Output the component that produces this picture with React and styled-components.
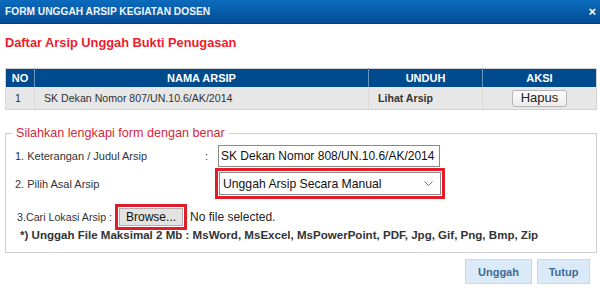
import React from 'react';
import styled, { createGlobalStyle } from 'styled-components';

const GlobalStyle = createGlobalStyle`
  html, body { margin: 0; padding: 0; background: #fff; }
  body { font-family: "Liberation Sans", Arial, sans-serif; color: #333; }
`;

const Dialog = styled.div`
  width: 600px;
  height: 291px;
  display: flex;
  flex-direction: column;
  overflow: hidden;
  background: #fff;
`;

const TitleBar = styled.div`
  height: 23px;
  flex: none;
  display: flex;
  align-items: center;
  justify-content: space-between;
  padding: 0 4px 0 5px;
  background: linear-gradient(#0b6bbd, #054d96);
  border-bottom: 1px solid #043c78;
  color: #eef4fb;
  font-size: 10.2px;
  font-weight: bold;
`;

const Close = styled.span`
  font-size: 13px;
  font-weight: bold;
  color: #fff;
  line-height: 1;
`;

const Body = styled.div`
  padding: 0 3px 0 5px;
`;

const Heading = styled.h2`
  margin: 11px 0 0;
  font-size: 12.8px;
  line-height: 16px;
  font-weight: bold;
  color: #ee1c2c;
`;

const Table = styled.table`
  margin-top: 17px;
  width: 592px;
  border-collapse: collapse;
  border: 1px solid #d2d2d2;
  font-size: 11px;
  th {
    background: #004a8e;
    color: #fff;
    font-weight: bold;
    height: 18px;
    padding: 0;
    border-left: 1px solid #6f95bd;
    text-align: center;
  }
  th:first-child { border-left: none; }
  td {
    background: #e7e7e7;
    height: 22px;
    padding: 0 9px;
    border-left: 1px solid #dadada;
    color: #333;
    font-size: 10.6px;
  }
`;

const Cell = styled.td`
  text-align: ${p => p.$align || 'left'};
  font-weight: ${p => (p.$bold ? 'bold' : 'normal')};
`;

const SmallButton = styled.button`
  font-family: "Liberation Sans", Arial, sans-serif;
  font-size: 13px;
  color: #222;
  height: 17px;
  width: 55px;
  padding: 0;
  border: 1px solid #b5b5b5;
  border-radius: 3px;
  background: linear-gradient(#fdfdfd, #ececec);
  line-height: 14px;
`;

const Fieldset = styled.fieldset`
  margin: 16px 0 0;
  width: 592px;
  box-sizing: border-box;
  border: 1px solid #cfcfcf;
  padding: 5px 9px 0 9px;
  height: 127px;
`;

const Legend = styled.legend`
  color: #d6283a;
  font-size: 12.6px;
  padding: 0 4px;
  margin-left: -3px;
`;

const FormGrid = styled.div`
  display: grid;
  grid-template-columns: 189px 11px auto;
  align-items: center;
  row-gap: 1px;
  font-size: 11px;
  color: #333;
`;

const Colon = styled.span`
  padding-left: 1px;
`;

const TextInput = styled.input`
  width: 222px;
  height: 22px;
  box-sizing: border-box;
  border: 1px solid #8a8a8a;
  padding: 0 2px;
  font-family: "Liberation Sans", Arial, sans-serif;
  font-size: 12px;
  color: #111;
  margin-left: 3px;
`;

const Highlight = styled.div`
  display: inline-flex;
  border: 3px solid #e11d2a;
  padding: 1px;
  justify-self: start;
`;

const SelectBox = styled.div`
  width: 222px;
  height: 23px;
  box-sizing: border-box;
  border: 1px solid #8a8a8a;
  display: flex;
  align-items: center;
  justify-content: space-between;
  padding: 0 7px 0 3px;
  font-size: 12.2px;
  color: #111;
  background: #fff;
`;

const FileRow = styled.div`
  display: flex;
  align-items: center;
  gap: 3px;
  margin-top: 5px;
  margin-left: 2px;
  font-size: 10.7px;
`;

const BrowseButton = styled.div`
  width: 64px;
  height: 18px;
  box-sizing: border-box;
  border: 1px solid #b0b0b0;
  background: #e3e3e3;
  font-size: 12px;
  color: #111;
  display: flex;
  align-items: center;
  justify-content: center;
`;

const FileText = styled.span`
  font-size: 12px;
  color: #222;
`;

const Note = styled.div`
  margin: -1px 0 0 5px;
  line-height: 13px;
  font-size: 11.55px;
  font-weight: bold;
  color: #333;
`;

const Actions = styled.div`
  display: flex;
  justify-content: flex-end;
  gap: 5px;
  padding: 6px 7px 0 0;
`;

const ActionButton = styled.button`
  width: ${p => p.$w}px;
  height: 25px;
  border: 1px solid #c4dbef;
  background: #dbeaf8;
  color: #3e6a98;
  font-family: "Liberation Sans", Arial, sans-serif;
  font-size: 11px;
  font-weight: bold;
  padding: 0;
`;

export default function App() {
  return (
    <>
      <GlobalStyle />
      <Dialog>
        <TitleBar>
          <span>FORM UNGGAH ARSIP KEGIATAN DOSEN</span>
          <Close>×</Close>
        </TitleBar>
        <Body>
          <Heading>Daftar Arsip Unggah Bukti Penugasan</Heading>
          <Table>
            <thead>
              <tr>
                <th style={{ width: 28 }}>NO</th>
                <th>NAMA ARSIP</th>
                <th style={{ width: 113 }}>UNDUH</th>
                <th style={{ width: 113 }}>AKSI</th>
              </tr>
            </thead>
            <tbody>
              <tr>
                <Cell>1</Cell>
                <Cell>SK Dekan Nomor 807/UN.10.6/AK/2014</Cell>
                <Cell $bold>Lihat Arsip</Cell>
                <Cell $align="center">
                  <SmallButton>Hapus</SmallButton>
                </Cell>
              </tr>
            </tbody>
          </Table>
          <Fieldset>
            <Legend>Silahkan lengkapi form dengan benar</Legend>
            <FormGrid>
              <span>1. Keterangan / Judul Arsip</span>
              <Colon>:</Colon>
              <TextInput readOnly value="SK Dekan Nomor 808/UN.10.6/AK/2014" />
              <span>2. Pilih Asal Arsip</span>
              <span />
              <Highlight>
                <SelectBox>
                  <span>Unggah Arsip Secara Manual</span>
                  <svg width="9" height="5" viewBox="0 0 9 5">
                    <path d="M0.5 0.5 L4.5 4.5 L8.5 0.5" fill="none" stroke="#777" strokeWidth="1" />
                  </svg>
                </SelectBox>
              </Highlight>
            </FormGrid>
            <FileRow>
              <span>3.Cari Lokasi Arsip :</span>
              <Highlight>
                <BrowseButton>Browse...</BrowseButton>
              </Highlight>
              <FileText>No file selected.</FileText>
            </FileRow>
            <Note>*) Unggah File Maksimal 2 Mb : MsWord, MsExcel, MsPowerPoint, PDF, Jpg, Gif, Png, Bmp, Zip</Note>
          </Fieldset>
          <Actions>
            <ActionButton $w={67}>Unggah</ActionButton>
            <ActionButton $w={53}>Tutup</ActionButton>
          </Actions>
        </Body>
      </Dialog>
    </>
  );
}
